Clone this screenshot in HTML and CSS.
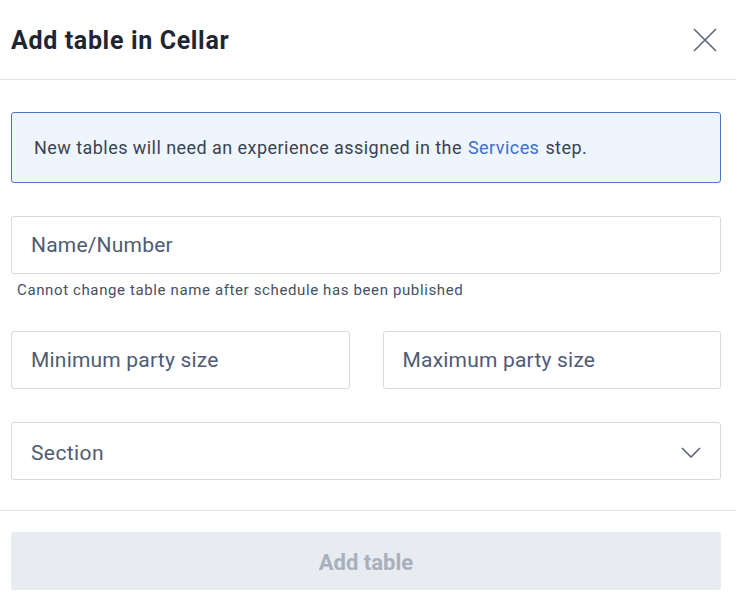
FILE: index.html
```html
<!DOCTYPE html>
<html lang="en">
<head>
  <meta charset="UTF-8">
  <title>Add table in Cellar</title>
  <link rel="stylesheet" href="styles.css">
</head>
<body>
  <div class="modal">
    <div class="modal-header">
      <h1>Add table in Cellar</h1>
      <button class="close" aria-label="Close">
        <svg width="26" height="26" viewBox="0 0 26 26"><path d="M2 2L24 24M24 2L2 24" stroke="#5b6478" stroke-width="1.6" fill="none"/></svg>
      </button>
    </div>
    <div class="modal-body">
      <div class="notice">New tables will need an experience assigned in the <a href="#">Services</a> step.</div>
      <div class="field">
        <input class="input" type="text" placeholder="Name/Number">
        <p class="hint">Cannot change table name after schedule has been published</p>
      </div>
      <div class="row">
        <input class="input narrow" type="text" placeholder="Minimum party size">
        <input class="input narrow" type="text" placeholder="Maximum party size">
      </div>
      <div class="select">
        <span>Section</span>
        <svg width="20" height="11" viewBox="0 0 20 11"><path d="M1 1L10 10L19 1" stroke="#5b6478" stroke-width="1.6" fill="none"/></svg>
      </div>
    </div>
    <div class="modal-footer">
      <button class="submit" disabled>Add table</button>
    </div>
  </div>
</body>
</html>
```

FILE: styles.css
```css
body {
  margin: 0;
  background: #fff;
  font-family: Roboto, "Liberation Sans", sans-serif;
  color: #3a4354;
}

.modal {
  width: 736px;
}

.modal-header {
  height: 80px;
  border-bottom: 1px solid #dcdfe3;
  display: flex;
  align-items: center;
  justify-content: space-between;
  padding: 0 18px 0 11px;
  box-sizing: border-box;
}

.modal-header h1 {
  margin: 2px 0 0 0;
  font-size: 25px;
  font-weight: 700;
  letter-spacing: 0.65px;
  color: #1f2633;
}

.close {
  border: 0;
  background: none;
  padding: 0;
  width: 26px;
  height: 26px;
}

.modal-body {
  padding: 32px 15px 30px 11px;
}

.notice {
  background: #eff5fc;
  border: 1px solid #4d76c2;
  border-radius: 3px;
  height: 71px;
  box-sizing: border-box;
  padding: 0 22px;
  display: flex;
  align-items: center;
  font-size: 18px;
  letter-spacing: 0.45px;
  color: #3a4354;
}

.notice a {
  color: #3c6fd0;
  text-decoration: none;
  margin: 0 6px;
}

.field {
  margin-top: 33px;
}

.input {
  display: block;
  width: 100%;
  height: 58px;
  box-sizing: border-box;
  border: 1px solid #d6d9de;
  border-radius: 3px;
  padding: 0 19px;
  font-family: inherit;
  font-size: 21px;
  letter-spacing: 0.2px;
  color: #4f5b73;
  background: #fff;
}

.input::placeholder {
  color: #4f5b73;
}

.hint {
  margin: 7px 0 0 6px;
  font-size: 15px;
  letter-spacing: 0.62px;
  color: #465064;
}

.row {
  display: flex;
  gap: 33px;
  margin-top: 32px;
}

.narrow {
  flex: 1;
}

.select {
  margin-top: 33px;
  height: 58px;
  box-sizing: border-box;
  border: 1px solid #d6d9de;
  border-radius: 3px;
  padding: 3px 19px 0 19px;
  display: flex;
  align-items: center;
  justify-content: space-between;
  font-size: 21px;
  letter-spacing: 0.4px;
  color: #4f5b73;
}

.modal-footer {
  border-top: 1px solid #dcdfe3;
  padding: 21px 15px 0 11px;
}

.submit {
  display: block;
  width: 100%;
  height: 58px;
  padding-top: 3px;
  border: 0;
  border-radius: 3px;
  background: #e8ebef;
  font-family: inherit;
  font-size: 22px;
  font-weight: 700;
  color: #a9b0bd;
}
```
